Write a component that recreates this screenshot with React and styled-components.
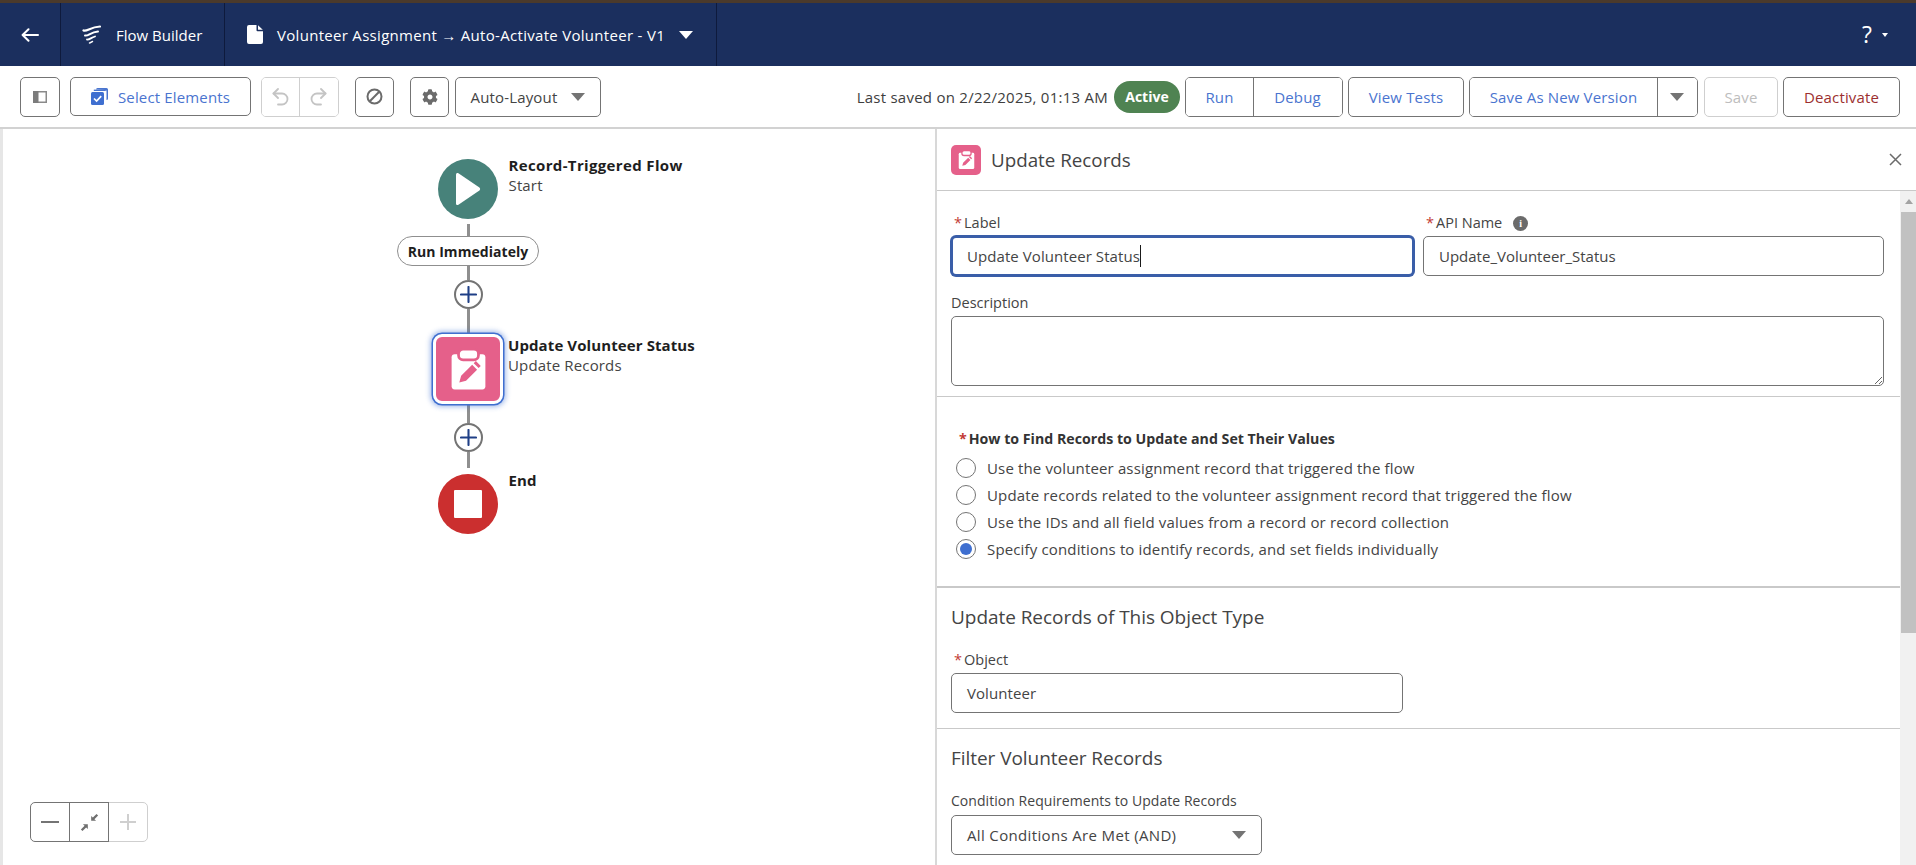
import React from "react";
import styled, { createGlobalStyle } from "styled-components";
import { FaCog } from "react-icons/fa";

const FONT = `"Open Sans", "Noto Sans", "Liberation Sans", sans-serif`;

const Global = createGlobalStyle`
  html, body { margin: 0; padding: 0; height: 100%; background: #fff; overflow: hidden; }
  * { box-sizing: border-box; }
  body { font-family: ${FONT}; font-size: 15px; color: #444; letter-spacing: 0.15px; }
`;

const Page = styled.div`
  width: 1916px; height: 865px; display: flex; flex-direction: column; overflow: hidden;
`;
const TopStripe = styled.div`height: 3px; background: #4b3a2b; flex: none;`;

const Header = styled.header`
  height: 63px; flex: none; background: #1b2f5e; color: #fff; display: flex; align-items: stretch;
`;
const HeaderCell = styled.div`
  display: flex; align-items: center; flex: none; border-right: 1px solid #0e1a3c;
  width: ${p => p.$w}px; padding-left: ${p => p.$pad}px; gap: ${p => p.$gap || 0}px;
`;
const HeaderText = styled.span`font-size: 15px; white-space: nowrap; letter-spacing: ${p => p.$ls || 0}px;`;
const HeaderRight = styled.div`
  margin-left: auto; display: flex; align-items: center; gap: 10px; padding-right: 28px;
`;
const HelpMark = styled.span`font-size: 23px; line-height: 1; font-weight: 500; color: #fff;`;
const Caret = styled.span`
  display: inline-block; flex: none; width: 0; height: 0;
  border-left: ${p => p.$s}px solid transparent; border-right: ${p => p.$s}px solid transparent;
  border-top: ${p => Math.round(p.$s * 1.15)}px solid ${p => p.$c || "#747474"};
`;

const Toolbar = styled.div`
  height: 63px; flex: none; display: flex; align-items: center; padding: 0 16px 0 20px;
  border-bottom: 2px solid #d2d2d2; background: #fff;
`;
const Btn = styled.button`
  font: inherit; letter-spacing: inherit; height: ${p => p.$h || 40}px; width: ${p => p.$w}px; flex: none;
  display: flex; align-items: center; justify-content: center; gap: ${p => p.$gap || 0}px;
  background: #fff; padding: 0; white-space: nowrap;
  margin-left: ${p => p.$ml || 0}px;
  border: 1px solid ${p => (p.$off ? "#cfcfcf" : "#747474")}; border-radius: 5px;
  color: ${p => p.$color || "#4a74cf"};
`;
const Group = styled.div`
  display: flex; flex: none; height: 40px; margin-left: ${p => p.$ml || 0}px;
  border: 1px solid ${p => (p.$off ? "#cfcfcf" : "#747474")}; border-radius: 5px; overflow: hidden;
`;
const GroupItem = styled.button`
  font: inherit; letter-spacing: inherit; width: ${p => p.$w}px; flex: none; background: #fff; padding: 0; border: 0;
  display: flex; align-items: center; justify-content: center;
  color: #4a74cf;
  border-right: 1px solid ${p => (p.$last ? "transparent" : p.$off ? "#cfcfcf" : "#747474")};
`;
const Saved = styled.span`margin-left: auto; white-space: nowrap; color: #3e3e3e; letter-spacing: 0.25px;`;
const ActivePill = styled.span`
  margin-left: 6px; width: 66px; height: 32px; flex: none; border-radius: 16px; background: #4f8352; color: #fff;
  font-weight: 700; font-size: 14px; letter-spacing: 0; display: flex; align-items: center; justify-content: center;
`;

const Main = styled.div`flex: 1; min-height: 0; display: flex;`;
const Canvas = styled.section`
  width: 935px; flex: none; position: relative; border-left: 3px solid #e6e6e6; background: #fff;
  padding: 30px 0 0 315px;
`;
const Flow = styled.div`width: 300px; display: flex; flex-direction: column; align-items: center;`;
const Line = styled.div`
  width: 3px; flex: none; background: #8f8f8f; height: ${p => p.$h}px; margin-top: ${p => p.$mt || 0}px;
`;
const Node = styled.div`position: relative; flex: none; display: flex; align-items: center; justify-content: center;`;
const Circle = styled(Node)`
  width: 60px; height: 60px; border-radius: 50%; background: ${p => p.$bg}; margin-top: ${p => p.$mt || 0}px;
`;
const PinkBox = styled(Node)`
  width: 70px; height: 70px; border-radius: 9px; background: #e5608a; border: 3px solid #fff;
  box-shadow: 0 0 0 1.5px #3f6fd0, 0 0 5px 3px rgba(63, 111, 208, 0.45);
`;
const NodeLabel = styled.div`
  position: absolute; top: ${p => p.$top}px; left: calc(100% + ${p => p.$left}px); white-space: nowrap; line-height: 20px;
`;
const NodeTitle = styled.div`font-weight: 700; color: #1e1e1e; letter-spacing: ${p => p.$ls ?? 0.1}px;`;
const NodeSub = styled.div`color: #444;`;
const Pill = styled.div`
  width: 142px; height: 30px; flex: none; border-radius: 15px; border: 1px solid #8f8f8f; background: #fff;
  display: flex; align-items: center; justify-content: center; font-weight: 700; font-size: 14px; letter-spacing: 0.05px; color: #1e1e1e;
`;
const PlusBtn = styled.div`
  width: 29px; height: 29px; flex: none; border-radius: 50%; border: 2px solid #747474; background: #fff;
  display: flex; align-items: center; justify-content: center;
`;
const ZoomBar = styled.div`
  position: absolute; left: 27px; bottom: 23px; display: flex; height: 40px;
`;
const ZoomCell = styled.div`
  width: 40px; background: #fff; display: flex; align-items: center; justify-content: center;
  border: 1px solid ${p => (p.$off ? "#cfcfcf" : "#747474")};
  margin-left: ${p => (p.$first ? 0 : -1)}px;
  border-radius: ${p => (p.$first ? "5px 0 0 5px" : p.$end ? "0 5px 5px 0" : "0")};
  position: relative; z-index: ${p => (p.$off ? 0 : 1)};
`;

const Panel = styled.aside`
  flex: 1; min-width: 0; display: flex; flex-direction: column; border-left: 2px solid #d8d8d8; background: #fff;
`;
const PanelHead = styled.div`
  height: 62px; flex: none; display: flex; align-items: center; padding: 0 14px 0 14px; gap: 10px;
  border-bottom: 1px solid #c9c9c9;
`;
const PanelIcon = styled.div`
  width: 30px; height: 30px; border-radius: 5px; background: #e5608a; display: flex; align-items: center; justify-content: center; flex: none;
`;
const PanelTitle = styled.h1`margin: 0; font-size: 18.8px; font-weight: 400; color: #444; letter-spacing: 0;`;
const CloseBtn = styled.span`margin-left: auto; display: flex;`;
const PanelBody = styled.div`flex: 1; min-height: 0; display: flex;`;
const Scroll = styled.div`flex: 1; min-width: 0; overflow: hidden;`;
const ScrollTrack = styled.div`
  width: 16px; flex: none; background: #f1f1f1; display: flex; flex-direction: column; align-items: center; padding-left: 1px;
`;
const ScrollArrow = styled.div`
  height: 21px; flex: none; display: flex; align-items: center; justify-content: center; width: 100%;
`;
const ArrowUp = styled.span`
  width: 0; height: 0; border-left: 4.5px solid transparent; border-right: 4.5px solid transparent; border-bottom: 5px solid #a3a3a3;
`;
const ScrollThumb = styled.div`width: 100%; height: 421px; background: #c1c1c1; flex: none;`;

const Section = styled.div`
  padding: ${p => p.$pt}px 16px ${p => p.$pb}px ${p => p.$pl || 14}px;
  border-bottom: ${p => p.$bw ?? 1}px solid #c9c9c9;
`;
const TwoCols = styled.div`display: grid; grid-template-columns: 463px 461px; column-gap: 9px;`;
const FieldLabel = styled.label`
  display: flex; align-items: center; height: 20px; line-height: 20px; padding-left: ${p => p.$pl || 0}px; color: #444; white-space: nowrap;
  font-size: ${p => p.$fs || 14.5}px; letter-spacing: ${p => (p.$fs ? 0.05 : 0)}px;
  margin-top: ${p => p.$mt || 0}px; margin-bottom: ${p => p.$mb ?? 3}px;
`;
const Star = styled.span`color: #c23934; margin-right: 2px;`;
const InfoDot = styled.span`
  width: 15px; height: 15px; border-radius: 50%; background: #6b6b6b; color: #fff; margin-left: 11px; flex: none;
  display: flex; align-items: center; justify-content: center; font: 700 10px "Liberation Serif", serif;
`;
const Field = styled.div`
  height: 40px; display: flex; align-items: center; padding: 0 15px; background: #fff; color: #444;
  border: 1px solid #747474; border-radius: 5px; width: ${p => (p.$w ? `${p.$w}px` : "auto")};
  white-space: nowrap; letter-spacing: ${p => p.$ls ?? 0.07}px;
`;
const FocusField = styled(Field)`
  border: 2px solid #3a5ea8; padding: 0 14px; box-shadow: 0 0 0 1px #3a5ea8;
`;
const CaretBar = styled.span`width: 1px; height: 22px; background: #1a1a1a; flex: none;`;
const SelectCaret = styled.span`margin-left: auto; display: flex;`;
const Area = styled.textarea`
  display: block; width: 100%; height: 70px; border: 1px solid #747474; border-radius: 5px; background: #fff; outline: none; margin: 0; padding: 8px 15px;
`;
const RadioHead = styled.div`
  height: 20px; line-height: 20px; font-weight: 700; color: #333; display: flex; align-items: center; padding-left: 8px; margin-bottom: 5px; font-size: 14.2px; letter-spacing: 0;
`;
const RadioRow = styled.div`height: 27px; display: flex; align-items: center; gap: 11px; padding-left: 5px; white-space: nowrap;`;
const RadioMark = styled.span`
  width: 20px; height: 20px; border-radius: 50%; border: 1px solid #747474; background: #fff; flex: none;
  display: flex; align-items: center; justify-content: center;
`;
const RadioDot = styled.span`width: 12px; height: 12px; border-radius: 50%; background: #3f6fd0;`;
const SectionHeading = styled.h2`
  margin: 0; font-size: 19px; line-height: 24px; font-weight: 400; color: #444; letter-spacing: -0.05px;
`;

function ClipIcon({ size }) {
  return (
    <svg width={size} height={size * 1.12} viewBox="0 0 24 27">
      <rect x="1" y="4" width="22" height="23" rx="2" fill="#fff" />
      <rect x="5.5" y="0.8" width="13" height="7" rx="3" fill="#fff" stroke="#e5608a" strokeWidth="1.8" />
      <path d="M6 22.5l1.2-4.4 7.2-7.2 3.2 3.2-7.2 7.2zM15.4 9.9l1.4-1.4 3.2 3.2-1.4 1.4z" fill="#e5608a" />
    </svg>
  );
}

const Plus = () => (
  <svg width="17" height="17" viewBox="0 0 18 18"><path d="M9 1v16M1 9h16" stroke="#1f3f86" strokeWidth="2.2" strokeLinecap="round" /></svg>
);

export default function App() {
  return (
    <Page>
      <Global />
      <TopStripe />
      <Header>
        <HeaderCell $w={61} $pad={21}>
          <svg width="18" height="14" viewBox="0 0 18 14"><path d="M17 7H2M7.5 1.2L1.6 7l5.9 5.8" fill="none" stroke="#fff" strokeWidth="2" strokeLinecap="round" strokeLinejoin="round" /></svg>
        </HeaderCell>
        <HeaderCell $w={164} $pad={21} $gap={15}>
          <svg width="19" height="19" viewBox="0 0 19 19" fill="none" stroke="#fff" strokeLinecap="round">
            <path d="M1.5 5.5C5 7 8 2 18 1.5" strokeWidth="2.2" />
            <path d="M3 10.5C6 11.5 8.5 7 16 6.5" strokeWidth="2" />
            <path d="M5 14.5C7.5 15 9 12.5 13 11.5" strokeWidth="1.8" />
            <path d="M7.5 18C8.5 18 9 17 10.5 16.5" strokeWidth="1.5" />
          </svg>
          <HeaderText>Flow Builder</HeaderText>
        </HeaderCell>
        <HeaderCell $w={492} $pad={22} $gap={14}>
          <svg width="16" height="19" viewBox="0 0 16 19"><path d="M2 0h7.5v5.2a1 1 0 0 0 1 1H16V17a2 2 0 0 1-2 2H2a2 2 0 0 1-2-2V2a2 2 0 0 1 2-2zM11 0.3L15.8 4.8H11z" fill="#fff" /></svg>
          <HeaderText $ls={0.3}>Volunteer Assignment → Auto-Activate Volunteer - V1</HeaderText>
          <Caret $s={7} $c="#fff" />
        </HeaderCell>
        <HeaderRight>
          <HelpMark>?</HelpMark>
          <Caret $s={3.5} $c="#fff" />
        </HeaderRight>
      </Header>

      <Toolbar>
        <Btn $w={40}>
          <svg width="14" height="12" viewBox="0 0 14 12"><rect x="0.75" y="0.75" width="12.5" height="10.5" fill="#fff" stroke="#8a8a8a" strokeWidth="1.5" /><rect x="0" y="0" width="5.5" height="12" fill="#7c7c7c" /></svg>
        </Btn>
        <Btn $w={181} $h={39} $ml={10} $gap={10}>
          <svg width="17" height="17" viewBox="0 0 17 17">
            <path d="M5 1.5A1.5 1.5 0 0 1 6.5 0h9A1.5 1.5 0 0 1 17 1.5v9a1.5 1.5 0 0 1-1.5 1.5V3a1.5 1.5 0 0 0-1-1z" fill="#4a75cf" />
            <rect x="0" y="4" width="13" height="13" rx="1.5" fill="#3f6fd0" />
            <rect x="2.8" y="1.6" width="12" height="1.4" fill="#4a75cf" />
            <path d="M3 10.5l2.6 2.6 4.6-5" fill="none" stroke="#fff" strokeWidth="1.7" />
          </svg>
          Select Elements
        </Btn>
        <Group $ml={10} $off>
          <GroupItem $w={38} $off>
            <svg width="17" height="18" viewBox="0 0 17 18" fill="none" stroke="#c4c4c4" strokeWidth="1.8" strokeLinecap="round" strokeLinejoin="round"><path d="M6 1L1.5 5.5 6 10" /><path d="M1.5 5.5H10a5.5 5.5 0 0 1 0 11H6" /></svg>
          </GroupItem>
          <GroupItem $w={38} $off $last>
            <svg width="17" height="18" viewBox="0 0 17 18" fill="none" stroke="#c4c4c4" strokeWidth="1.8" strokeLinecap="round" strokeLinejoin="round"><path d="M11 1l4.5 4.5L11 10" /><path d="M15.5 5.5H7a5.5 5.5 0 0 0 0 11h4" /></svg>
          </GroupItem>
        </Group>
        <Btn $w={39} $ml={16}>
          <svg width="17" height="17" viewBox="0 0 17 17" fill="none" stroke="#6b6b6b" strokeWidth="2"><circle cx="8.5" cy="8.5" r="7" /><path d="M3.8 13.2L13.2 3.8" /></svg>
        </Btn>
        <Btn $w={39} $ml={16} $color="#6b6b6b">
          <FaCog size={16} />
        </Btn>
        <Btn $w={146} $ml={6} $color="#444" $gap={14}>
          Auto-Layout
          <Caret $s={7} />
        </Btn>

        <Saved>Last saved on 2/22/2025, 01:13 AM</Saved>
        <ActivePill>Active</ActivePill>
        <Group $ml={5}>
          <GroupItem $w={68}>Run</GroupItem>
          <GroupItem $w={88} $last>Debug</GroupItem>
        </Group>
        <Btn $w={116} $ml={5}>View Tests</Btn>
        <Group $ml={5}>
          <GroupItem $w={188}>Save As New Version</GroupItem>
          <GroupItem $w={39} $last><Caret $s={7} /></GroupItem>
        </Group>
        <Btn $w={74} $ml={6} $off $color="#bdbdbd">Save</Btn>
        <Btn $w={117} $ml={5} $color="#9c2f2f">Deactivate</Btn>
      </Toolbar>

      <Main>
        <Canvas>
          <Flow>
            <Circle $bg="#47827a">
              <svg width="28" height="36" viewBox="0 0 28 36"><path d="M2 3.5v29c0 1.3 1.3 2 2.4 1.3l21-14.3c1-.7 1-2.2 0-2.9L4.4 2.2C3.3 1.5 2 2.2 2 3.5z" fill="#fff" /></svg>
              <NodeLabel $top={-4} $left={10.5}>
                <NodeTitle $ls={0.35}>Record-Triggered Flow</NodeTitle>
                <NodeSub>Start</NodeSub>
              </NodeLabel>
            </Circle>
            <Line $h={12} $mt={5} />
            <Pill>Run Immediately</Pill>
            <Line $h={14} />
            <PlusBtn><Plus /></PlusBtn>
            <Line $h={25} />
            <PinkBox>
              <ClipIcon size={37} />
              <NodeLabel $top={-2} $left={8}>
                <NodeTitle>Update Volunteer Status</NodeTitle>
                <NodeSub>Update Records</NodeSub>
              </NodeLabel>
            </PinkBox>
            <Line $h={19} />
            <PlusBtn><Plus /></PlusBtn>
            <Line $h={16} />
            <Circle $bg="#cb2f2f" $mt={6}>
              <svg width="28" height="28" viewBox="0 0 28 28"><rect width="28" height="28" rx="1" fill="#fff" /></svg>
              <NodeLabel $top={-4} $left={10.5}>
                <NodeTitle>End</NodeTitle>
              </NodeLabel>
            </Circle>
          </Flow>
          <ZoomBar>
            <ZoomCell $first>
              <svg width="18" height="2" viewBox="0 0 18 2"><rect width="18" height="2" fill="#747474" /></svg>
            </ZoomCell>
            <ZoomCell>
              <svg width="19" height="19" viewBox="0 0 17 17" fill="#6f6f6f"><path d="M10 7V2.6l1.5 1.5L14.8.8l1.4 1.4-3.3 3.3L14.4 7zM7 10v4.4l-1.5-1.5-3.3 3.3-1.4-1.4 3.3-3.3L2.6 10z" /></svg>
            </ZoomCell>
            <ZoomCell $off $end>
              <svg width="16" height="16" viewBox="0 0 16 16"><path d="M8 0v16M0 8h16" stroke="#cfcfcf" strokeWidth="2" /></svg>
            </ZoomCell>
          </ZoomBar>
        </Canvas>

        <Panel>
          <PanelHead>
            <PanelIcon><ClipIcon size={17} /></PanelIcon>
            <PanelTitle>Update Records</PanelTitle>
            <CloseBtn>
              <svg width="13" height="13" viewBox="0 0 13 13"><path d="M1 1l11 11M12 1L1 12" stroke="#6b6b6b" strokeWidth="1.5" /></svg>
            </CloseBtn>
          </PanelHead>
          <PanelBody>
            <Scroll>
              <Section $pt={22} $pb={10}>
                <TwoCols>
                  <div>
                    <FieldLabel $pl={3}><Star>*</Star>Label</FieldLabel>
                    <FocusField>Update Volunteer Status<CaretBar /></FocusField>
                  </div>
                  <div>
                    <FieldLabel $pl={3}><Star>*</Star>API Name<InfoDot>i</InfoDot></FieldLabel>
                    <Field $ls={0}>Update_Volunteer_Status</Field>
                  </div>
                </TwoCols>
                <FieldLabel $mt={17}>Description</FieldLabel>
                <Area readOnly />
              </Section>
              <Section $pt={32} $pb={24} $bw={2} $pl={14}>
                <RadioHead><Star>*</Star>How to Find Records to Update and Set Their Values</RadioHead>
                <RadioRow><RadioMark />Use the volunteer assignment record that triggered the flow</RadioRow>
                <RadioRow><RadioMark />Update records related to the volunteer assignment record that triggered the flow</RadioRow>
                <RadioRow><RadioMark />Use the IDs and all field values from a record or record collection</RadioRow>
                <RadioRow><RadioMark><RadioDot /></RadioMark>Specify conditions to identify records, and set fields individually</RadioRow>
              </Section>
              <Section $pt={17} $pb={15}>
                <SectionHeading>Update Records of This Object Type</SectionHeading>
                <FieldLabel $pl={3} $mt={21}><Star>*</Star>Object</FieldLabel>
                <Field $w={452}>Volunteer</Field>
              </Section>
              <Section $pt={17} $pb={20} $bw={0}>
                <SectionHeading>Filter Volunteer Records</SectionHeading>
                <FieldLabel $mt={21} $mb={4} $fs={14}>Condition Requirements to Update Records</FieldLabel>
                <Field $w={311} $ls={0.35}>All Conditions Are Met (AND)<SelectCaret><Caret $s={7} /></SelectCaret></Field>
              </Section>
            </Scroll>
            <ScrollTrack>
              <ScrollArrow><ArrowUp /></ScrollArrow>
              <ScrollThumb />
            </ScrollTrack>
          </PanelBody>
        </Panel>
      </Main>
    </Page>
  );
}
